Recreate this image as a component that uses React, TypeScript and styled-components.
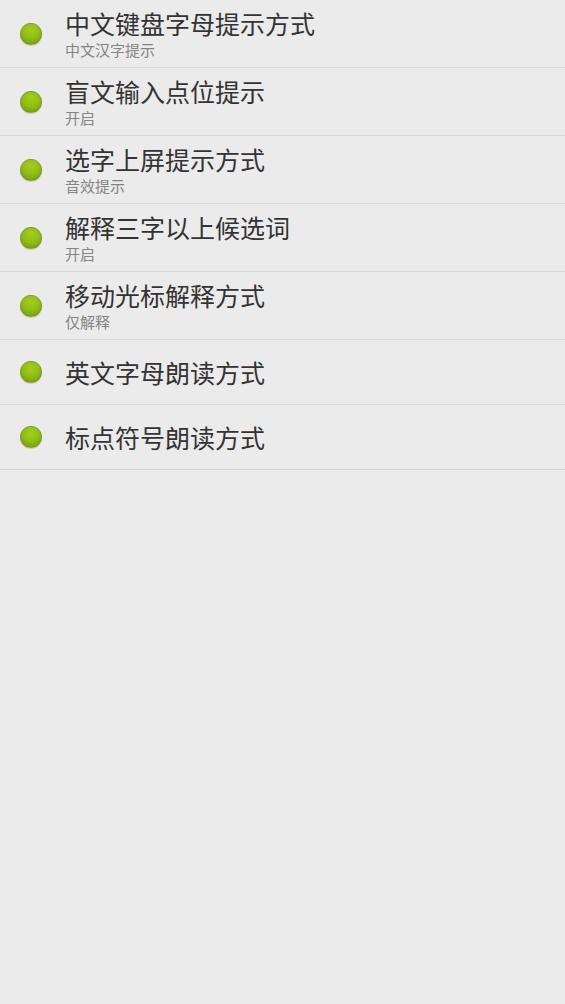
import styled, { createGlobalStyle } from "styled-components";

const GlobalStyle = createGlobalStyle`
  html, body {
    margin: 0;
    padding: 0;
    background: #ebebeb;
  }
  body {
    font-family: "Noto Sans CJK SC", "Noto Sans", sans-serif;
  }
`;

interface Option {
  title: string;
  value?: string;
}

const options: Option[] = [
  { title: "中文键盘字母提示方式", value: "中文汉字提示" },
  { title: "盲文输入点位提示", value: "开启" },
  { title: "选字上屏提示方式", value: "音效提示" },
  { title: "解释三字以上候选词", value: "开启" },
  { title: "移动光标解释方式", value: "仅解释" },
  { title: "英文字母朗读方式" },
  { title: "标点符号朗读方式" },
];

const App = () => {
  return (
    <>
      <GlobalStyle />
      <Page>
        <List>
          {options.map((item) => (
            <Row key={item.title} $hasValue={!!item.value}>
              <Dot />
              <TextBox>
                <Title>{item.title}</Title>
                {item.value && <Value>{item.value}</Value>}
              </TextBox>
            </Row>
          ))}
        </List>
      </Page>
    </>
  );
};

export default App;

const Page = styled.div`
  min-height: 1004px;
  background: #ebebeb;
`;

const List = styled.div`
  display: flex;
  flex-direction: column;
`;

const Row = styled.div<{ $hasValue: boolean }>`
  display: flex;
  align-items: center;
  box-sizing: border-box;
  min-height: 65px;
  padding: ${(p) => (p.$hasValue ? "8px 0 8px" : "0")};
  border-bottom: 1px solid #d5d5d5;
`;

const Dot = styled.span`
  flex: none;
  width: 22px;
  height: 22px;
  margin-left: 20px;
  margin-right: 23px;
  border-radius: 50%;
  box-sizing: border-box;
  border: 1px solid rgba(120, 120, 110, 0.35);
  background: radial-gradient(
    circle at 50% 30%,
    #a4cd1c 0%,
    #93bf14 45%,
    #6c9808 100%
  );
  box-shadow: 0 1px 1px rgba(0, 0, 0, 0.15);
`;

const TextBox = styled.div`
  display: flex;
  flex-direction: column;
`;

const Title = styled.div`
  font-size: 25px;
  line-height: 30px;
  color: #333333;
`;

const Value = styled.div`
  margin-top: 3px;
  font-size: 15px;
  line-height: 18px;
  color: #858585;
`;
